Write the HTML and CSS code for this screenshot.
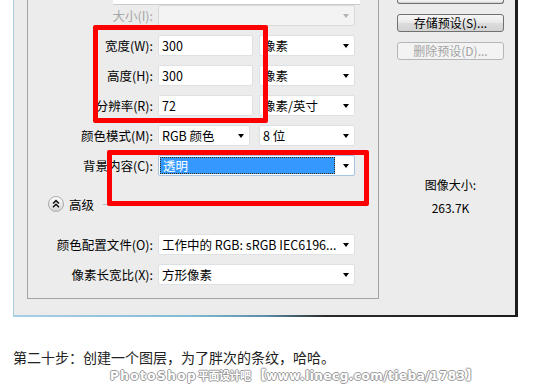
FILE: index.html
```html
<!DOCTYPE html>
<html lang="zh-CN">
<head>
  <meta charset="UTF-8" />
  <title>新建</title>
  <link rel="stylesheet" href="styles.css">
</head>
<body>
  <div class="page">

    <!-- Photoshop new-document dialog, cropped -->
    <div class="frame">
      <div class="dialog">
        <div class="group">
          <div class="cut-field"></div>

          <div class="form">
            <span class="lbl off">大小(I):</span>
            <div class="combo off"><span></span><i class="arrow"></i></div>

            <span class="lbl">宽度(W):</span>
            <div class="pair">
              <div class="field">300</div>
              <div class="combo unit"><span>像素</span><i class="arrow"></i></div>
            </div>

            <span class="lbl">高度(H):</span>
            <div class="pair">
              <div class="field">300</div>
              <div class="combo unit"><span>像素</span><i class="arrow"></i></div>
            </div>

            <span class="lbl">分辨率(R):</span>
            <div class="pair">
              <div class="field">72</div>
              <div class="combo unit"><span>像素/英寸</span><i class="arrow"></i></div>
            </div>

            <span class="lbl">颜色模式(M):</span>
            <div class="pair wide-gap">
              <div class="combo mode"><span>RGB 颜色</span><i class="arrow"></i></div>
              <div class="combo unit"><span>8 位</span><i class="arrow"></i></div>
            </div>

            <span class="lbl">背景内容(C):</span>
            <div class="combo focus"><span class="picked">透明</span><i class="arrow"></i></div>
          </div>

          <div class="advanced">
            <svg class="toggle" width="16" height="16" viewBox="0 0 16 16">
              <defs>
                <linearGradient id="knob" x1="0" y1="0" x2="0" y2="1">
                  <stop offset="0" stop-color="#ffffff"/>
                  <stop offset="1" stop-color="#d6d6d6"/>
                </linearGradient>
              </defs>
              <circle cx="8" cy="8" r="7.5" fill="url(#knob)" stroke="#a9a9a9"/>
              <path d="M5 7.5 L8 4.6 L11 7.5 M5 11.2 L8 8.3 L11 11.2" fill="none" stroke="#111" stroke-width="1.5"/>
            </svg>
            <span>高级</span>
            <div class="rule"></div>
          </div>

          <div class="form">
            <span class="lbl">颜色配置文件(O):</span>
            <div class="combo"><span>工作中的 RGB: sRGB IEC6196...</span><i class="arrow"></i></div>

            <span class="lbl">像素长宽比(X):</span>
            <div class="combo"><span>方形像素</span><i class="arrow"></i></div>
          </div>
        </div>

        <div class="side">
          <div class="btn cut-btn"></div>
          <div class="btn">存储预设(S)...</div>
          <div class="btn off">删除预设(D)...</div>
          <div class="size-info">
            <div>图像大小:</div>
            <div>263.7K</div>
          </div>
        </div>
      </div>
    </div>

    <p class="caption">第二十步：创建一个图层，为了胖次的条纹，哈哈。</p>
    <p class="watermark"><span class="wm-a">PhotoShop</span><span class="wm-b">平面设计吧</span><span class="wm-c">【www.linecg.com/tieba/1783】</span></p>

    <!-- red annotation boxes -->
    <div class="mark mark-size"></div>
    <div class="mark mark-bg"></div>
  </div>
</body>
</html>
```

FILE: styles.css
```css
* {
  box-sizing: border-box;
}

body {
  margin: 0;
  background: #fff;
  font-family: "Noto Sans CJK SC", "Noto Sans", sans-serif;
  color: #000;
}

.page {
  position: relative;
  width: 534px;
  height: 391px;
  overflow: hidden;
}

/* Dialog window */
.frame {
  margin-left: 13px;
  width: 505px;
  height: 317px;
  background: linear-gradient(to right, #a9cfe2 0%, #7fbad8 35%, #5a8ea8 50%, #2a2a2a 62%, #1c1c1c 100%);
}

.dialog {
  display: flex;
  margin: 0 3px 0 1px;
  height: 315px;
  background: #ececec;
}

.group {
  margin-left: 13px;
  width: 352px;
  height: 299px;
  border: 1px solid #a3a3a3;
  border-top: none;
  font-size: 12.5px;
}

.cut-field {
  margin-left: 85px;
  width: 247px;
  height: 5px;
  background: #fff;
  border-bottom: 1px solid #c8ccd2;
}

.form {
  display: grid;
  grid-template-columns: 125px 197px;
  column-gap: 5px;
  row-gap: 9px;
  align-items: center;
}

.group > .form:first-of-type {
  margin-top: 8px;
}

.lbl {
  text-align: right;
  line-height: 21px;
  white-space: nowrap;
}

.lbl.off {
  color: #a6a6a6;
}

.pair {
  display: flex;
  gap: 6px;
}

.pair.wide-gap {
  gap: 9px;
}

.field,
.combo {
  height: 21px;
  border: 1px solid #dde1e6;
  border-radius: 2px;
  background: #fff;
  line-height: 19px;
  padding-left: 3px;
  white-space: nowrap;
}

.field {
  width: 95px;
}

.combo {
  display: flex;
  align-items: center;
  justify-content: space-between;
  padding-right: 5px;
}

.combo.unit {
  width: 96px;
}

.combo.mode {
  width: 92px;
}

.combo.off {
  background: #f3f3f3;
  border-color: #d9d9d9;
}

.combo.focus {
  border-color: #a6c4e2;
  padding-left: 1px;
}

.picked {
  flex: 1;
  height: 17px;
  margin-right: 8px;
  padding-left: 2px;
  line-height: 15px;
  background: #3399ff;
  border: 1px dotted #3a2a10;
  color: #fff;
}

.arrow {
  display: block;
  width: 0;
  height: 0;
  border-left: 3.5px solid transparent;
  border-right: 3.5px solid transparent;
  border-top: 4px solid #000;
}

.combo.off .arrow {
  border-top-color: #b3b3b3;
}

.advanced {
  display: flex;
  align-items: center;
  margin: 20px 32px 22px 20px;
  height: 16px;
}

.advanced span {
  margin-left: 5px;
}

.rule {
  flex: 1;
  margin-left: 9px;
  height: 1px;
  background: #bdbdbd;
}

/* Right column */
.side {
  flex: 1;
  padding-left: 18px;
  font-size: 12px;
}

.btn {
  width: 107px;
  height: 18px;
  margin-bottom: 10px;
  border: 1px solid #707070;
  border-radius: 3px;
  background: linear-gradient(#f6f6f6, #e9e9e9 50%, #dcdcdc 51%, #d2d2d2);
  text-align: center;
  line-height: 16px;
}

.btn.cut-btn {
  height: 4px;
  border-top: none;
  border-radius: 0 0 3px 3px;
}

.btn.off {
  border-color: #b4b7ba;
  background: #f3f3f3;
  color: #a3a3a3;
}

.size-info {
  margin-top: 113px;
  width: 107px;
  text-align: center;
  line-height: 23px;
}

/* Text under the screenshot */
.caption {
  margin: 32px 0 0 13px;
  font-size: 14px;
  line-height: 16px;
  color: #222;
}

.watermark {
  margin: 4px 0 0 110px;
  font-family: "DejaVu Sans", sans-serif;
  font-weight: bold;
  font-size: 12px;
  line-height: 12px;
  letter-spacing: 1.5px;
  color: #fff;
  white-space: nowrap;
  text-shadow: 1px 0 0 #9a9a9a, -1px 0 0 #9a9a9a, 0 1px 0 #9a9a9a, 0 -1px 0 #9a9a9a;
}

.wm-b {
  display: inline-block;
  height: 12px;
  margin-left: 1px;
  font-family: "Noto Sans CJK SC", sans-serif;
  font-size: 11px;
  line-height: 12px;
  letter-spacing: -0.5px;
}

.wm-c {
  margin-left: 3px;
  letter-spacing: 0.5px;
}

/* Red annotation boxes */
.mark {
  position: absolute;
  border: 5px solid #ff0000;
  border-radius: 2px;
}

.mark-size {
  left: 93px;
  top: 25px;
  width: 175px;
  height: 98px;
}

.mark-bg {
  left: 107px;
  top: 150px;
  width: 262px;
  height: 56px;
}
```
